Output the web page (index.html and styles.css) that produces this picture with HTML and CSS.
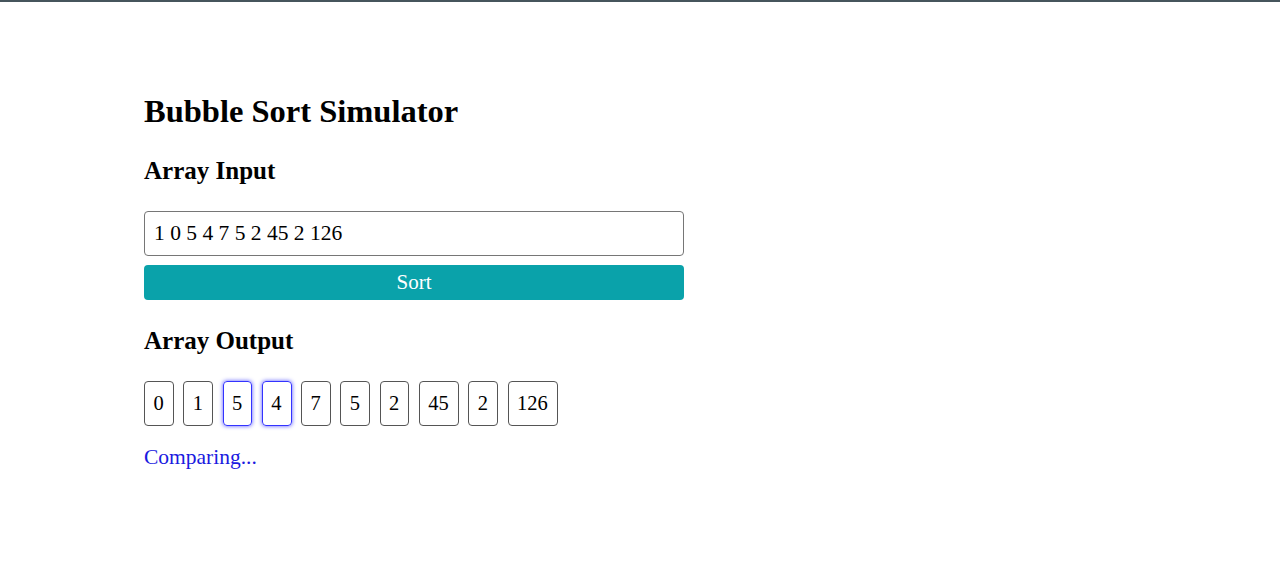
FILE: index.html
```html
<!DOCTYPE html>
<html>
<head>
<meta charset="utf-8">
<link rel="stylesheet" href="styles.css">
</head>
<body>
<div class="topbar"></div>
<main class="app">
  <h1 class="title">Bubble Sort Simulator</h1>
  <h2 class="section">Array Input</h2>
  <input class="array-input" type="text" value="1 0 5 4 7 5 2 45 2 126">
  <button class="sort-btn">Sort</button>
  <h2 class="section">Array Output</h2>
  <div class="cells">
    <span class="cell">0</span>
    <span class="cell">1</span>
    <span class="cell active">5</span>
    <span class="cell active">4</span>
    <span class="cell">7</span>
    <span class="cell">5</span>
    <span class="cell">2</span>
    <span class="cell">45</span>
    <span class="cell">2</span>
    <span class="cell">126</span>
  </div>
  <p class="status">Comparing...</p>
</main>
</body>
</html>
```
FILE: styles.css
```css
html, body {
  margin: 0;
  padding: 0;
  background: #ffffff;
  font-family: "Liberation Serif", "Times New Roman", serif;
  color: #000;
}
.topbar {
  height: 2px;
  background: #46555c;
}
.app {
  width: 540px;
  margin-left: 144px;
  padding-top: 70px;
  display: flex;
  flex-direction: column;
}
.title {
  font-size: 32.5px;
  font-weight: bold;
  margin: 21px 0 0 0;
  line-height: 37px;
}
.section {
  font-size: 25px;
  font-weight: bold;
  margin: 27px 0 26px 0;
  line-height: 28px;
}
.array-input {
  box-sizing: border-box;
  height: 45px;
  width: 540px;
  font-family: "Liberation Serif", "Times New Roman", serif;
  font-size: 21.5px;
  padding: 0 9px;
  border: 1px solid #767676;
  border-radius: 4px;
  color: #000;
  outline: none;
}
.sort-btn {
  margin-top: 9px;
  height: 35px;
  width: 540px;
  background: #0aa2aa;
  color: #fff;
  border: none;
  border-radius: 4px;
  font-family: "Liberation Serif", "Times New Roman", serif;
  font-size: 21px;
  padding: 0;
}
.cells {
  display: flex;
  gap: 9.5px;
}
.cell {
  box-sizing: border-box;
  height: 45px;
  padding: 0 9px 0 8.5px;
  border: 1px solid #555;
  border-radius: 4px;
  font-size: 20.5px;
  display: flex;
  align-items: center;
}
.cell.active {
  border-color: #3333ff;
  box-shadow: 0 0 4px #5555ff;
}
.status {
  margin: 19px 0 0 0;
  color: #1a1ae0;
  font-size: 21.5px;
}
```
